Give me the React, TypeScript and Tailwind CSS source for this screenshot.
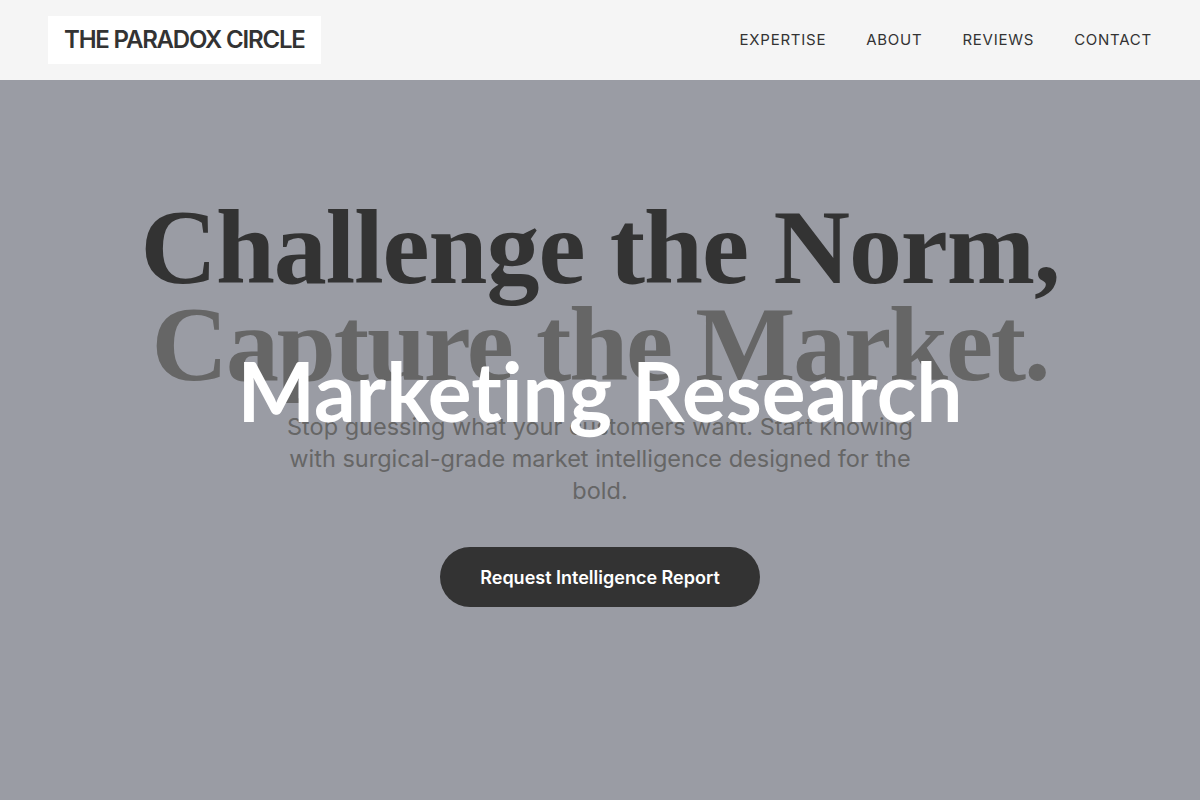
import React from "react";

const links = ["Expertise", "About", "Reviews", "Contact"];

const Header = () => {
  return (
    <header className="h-20 bg-[#f5f5f5] flex items-center justify-between px-12">
      <div className="bg-white h-12 px-4 flex items-center">
        <span className="font-['Inter',sans-serif] font-semibold text-[24px] tracking-[-0.05em] text-[#333]">
          THE PARADOX CIRCLE
        </span>
      </div>
      <nav className="flex items-center gap-10">
        {links.map((l) => (
          <a
            key={l}
            href="#"
            className="font-['Inter',sans-serif] text-[15px] uppercase tracking-[0.05em] text-[#333]"
          >
            {l}
          </a>
        ))}
      </nav>
    </header>
  );
};

const App = () => {
  return (
    <div className="min-h-[800px] flex flex-col bg-[#9a9ca4]">
      <Header />
      <section className="flex-1 flex flex-col items-center pt-[119px] text-center">
        <div className="relative">
          <h1 className="font-['Liberation_Serif',serif] font-bold text-[106px] leading-[97px] tracking-[-0.01em]">
            <span className="block text-[#333]">Challenge the Norm,</span>
            <span className="block text-[#666] tracking-[-0.02em]">Capture the Market.</span>
          </h1>
          {/* overlay label */}
          <div className="absolute left-0 right-0 top-[150px] font-['Lato',sans-serif] font-bold text-[82px] leading-[82px] text-white whitespace-nowrap [font-variant-ligatures:none]">
            Marketing Research
          </div>
        </div>
        <p className="mt-[18px] max-w-[640px] font-['Inter',sans-serif] text-[23.5px] leading-8 text-[#666]">
          Stop guessing what your customers want. Start knowing with surgical-grade market intelligence designed for the bold.
        </p>
        <button className="mt-10 h-[60px] px-10 rounded-full bg-[#333] text-white font-['Inter',sans-serif] font-semibold text-[18px]">
          Request Intelligence Report
        </button>
      </section>
    </div>
  );
};

export default App;
